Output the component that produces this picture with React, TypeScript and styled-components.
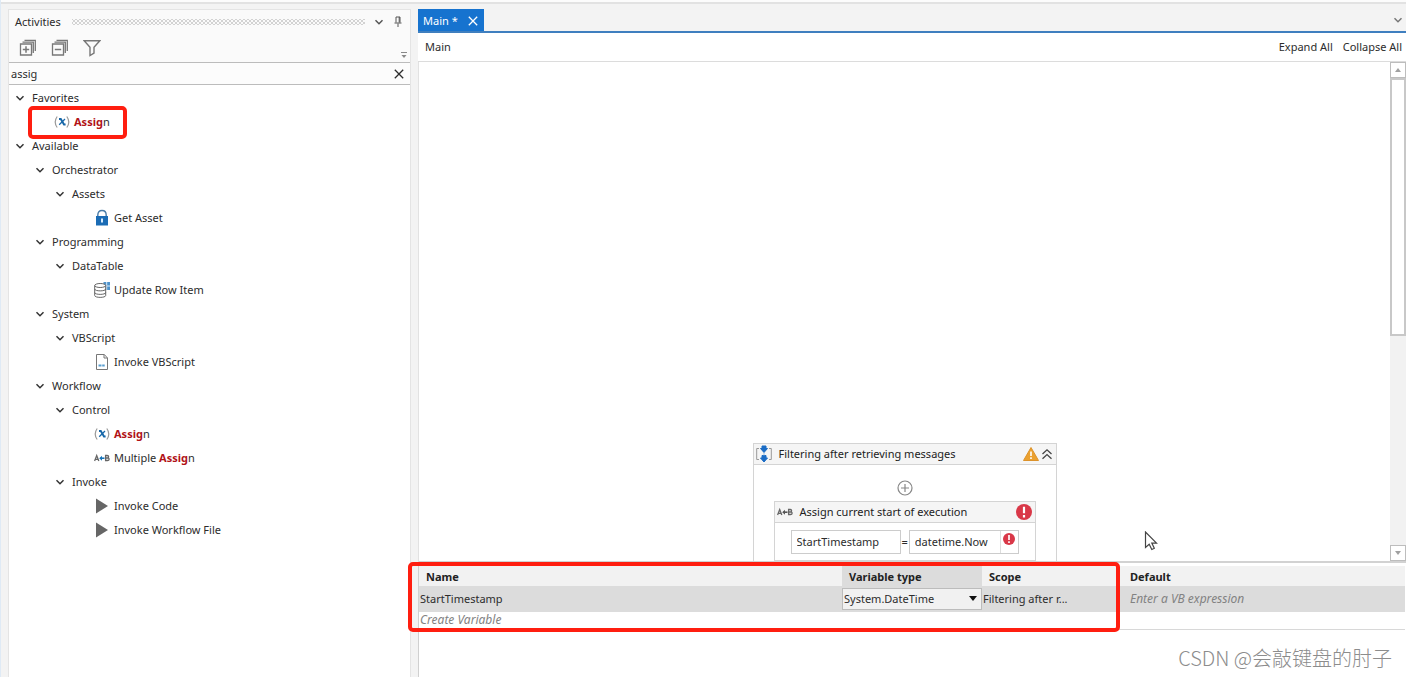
import React from "react";
import styled, { createGlobalStyle, css } from "styled-components";

const Global = createGlobalStyle`
  *, *::before, *::after { box-sizing: border-box; }
  body {
    margin: 0;
    background: #f2f2f2;
    color: #2c2c2c;
    font: 11px/16px "Noto Sans", "Open Sans", sans-serif;
  }
  button, input, select { font: inherit; color: inherit; margin: 0; }
`;

const Shell = styled.div`
  position: relative;
  min-height: 100vh;
  display: grid;
  grid-template-columns: 403px minmax(0, 1fr);
  column-gap: 7px;
  padding: 9px 0 0 7px;
  border-left: 1px solid #dfeaf5;
  overflow: hidden;
  background: linear-gradient(#fcfcfc 2px, #e2e2e2 2px, #e2e2e2 4px, #f3f3f3 4px);
`;

const PlainButton = styled.button`
  display: inline-flex;
  align-items: center;
  justify-content: center;
  padding: 0;
  border: 0;
  background: none;
  cursor: pointer;
`;

/* ---------- activities panel ---------- */

const Sidebar = styled.aside`
  display: flex;
  flex-direction: column;
  background: #fff;
  border: 1px solid #e4e4e4;
  border-bottom: 0;
`;

const SidebarHeader = styled.header`
  position: relative;
  height: 53px;
  background: #fafafa;
  border-bottom: 1px solid #bcbcbc;
`;

const TitleRow = styled.div`
  display: flex;
  align-items: center;
  height: 24px;
  padding: 0 7px 0 6px;
`;

const PanelTitle = styled.h2`
  margin: 0;
  font-size: 11px;
  font-weight: 400;
`;

const Grip = styled.span`
  flex: 1;
  height: 6px;
  margin: 0 8px 0 11px;
  background-image: radial-gradient(#d2d2d2 1px, transparent 1px), radial-gradient(#d2d2d2 1px, transparent 1px);
  background-size: 4px 4px;
  background-position: 0 0, 2px 2px;
`;

const TitleActions = styled.div`
  display: flex;
  gap: 8px;
`;

const ToolRow = styled.div`
  display: flex;
  gap: 14px;
  padding: 5px 0 0 10px;
`;

const Overflow = styled.span`
  position: absolute;
  right: 3px;
  bottom: 3px;
  display: flex;
`;

const SearchRow = styled.label`
  display: flex;
  align-items: center;
  height: 22px;
  padding: 0 6px 0 2px;
  background: #fcfcfc;
  border-bottom: 1px solid #bcbcbc;
`;

const SearchInput = styled.input`
  flex: 1;
  min-width: 0;
  padding: 0;
  border: 0;
  outline: 0;
  background: transparent;
`;

const Tree = styled.ul`
  margin: 0;
  padding: 1px 0 0;
  list-style: none;
`;

const TreeItem = styled.li`
  position: relative;
`;

const TreeRow = styled.button<{ $depth: number; $leaf?: boolean }>`
  display: flex;
  align-items: center;
  gap: ${(p) => (p.$leaf ? 4 : 6)}px;
  width: 100%;
  height: 24px;
  padding: 0 0 0 ${(p) => (p.$leaf ? 25 : 5) + p.$depth * 20}px;
  border: 0;
  background: none;
  text-align: left;
  white-space: pre;
  cursor: pointer;
`;

const Match = styled.b`
  color: #b11217;
  font-weight: 700;
`;

const Marker = styled.span`
  position: absolute;
  z-index: 2;
  border: 4px solid #ff1e10;
  border-radius: 5px;
  pointer-events: none;
`;

const RowMarker = styled(Marker)`
  top: -4px;
  left: 19px;
  width: 99px;
  height: 33px;
`;

/* ---------- designer ---------- */

const Workspace = styled.main`
  display: flex;
  flex-direction: column;
  min-width: 0;
`;

const TabBar = styled.div`
  display: flex;
  align-items: stretch;
  justify-content: space-between;
  height: 24px;
  padding-right: 2px;
  border-bottom: 2px solid #3f7fbf;
`;

const Tab = styled.div`
  display: flex;
  align-items: center;
  gap: 10px;
  padding: 2px 6px 0 5px;
  color: #fff;
  background: #1673cf;
`;

const TabLabel = styled(PlainButton)`
  white-space: pre;
`;

const Crumbs = styled.div`
  display: flex;
  align-items: center;
  gap: 10px;
  height: 29px;
  padding: 0 4px 0 7px;
  background: #fff;
  border-bottom: 1px solid #dcdcdc;
`;

const Crumb = styled(PlainButton)`
  margin-right: auto;
`;

const CanvasRow = styled.div`
  flex: 1;
  display: flex;
  min-height: 160px;
  background: #fff;
  border-left: 1px solid #e2e2e2;
  border-bottom: 2px solid #d2d2d2;
`;

const Canvas = styled.div`
  position: relative;
  flex: 1;
  display: flex;
  flex-direction: column;
  justify-content: flex-end;
  align-items: center;
`;

const ScrollBar = styled.div`
  display: flex;
  flex-direction: column;
  justify-content: space-between;
  width: 16px;
  background: #f2f2f2;
`;

const ScrollHead = styled.div`
  flex: 0 0 274px;
  display: flex;
  flex-direction: column;
`;

const ScrollButton = styled(PlainButton)`
  flex: none;
  width: 16px;
  height: 16px;
  background: #fff;
  border: 1px solid #bdbdbd;
`;

const Thumb = styled.div`
  flex: 1;
  background: #fff;
  border: 2px solid #c8c8c8;
`;

const Sequence = styled.section`
  display: flex;
  flex-direction: column;
  align-items: center;
  width: 304px;
  border: 1px solid #d4d4d4;
  border-bottom: 0;
`;

const NodeHeader = styled.header`
  display: flex;
  align-items: center;
  gap: 7px;
  width: 100%;
  height: 21px;
  padding: 0 3px 0 2px;
  background: #f5f5f5;
  border-bottom: 1px solid #d4d4d4;
  color: #222;
`;

const NodeTitle = styled.h3`
  flex: 1;
  margin: 0;
  font-size: 11px;
  font-weight: 400;
`;

const Badges = styled.span`
  display: flex;
  align-items: center;
  gap: 2px;
`;

const AddButton = styled(PlainButton)`
  margin: 15px 0 5px;
`;

const AssignCard = styled.section`
  width: 262px;
  border: 1px solid #d4d4d4;
`;

const AssignBody = styled.div`
  display: flex;
  align-items: center;
  gap: 1px;
  padding: 7px 16px 6px;
  height: 37px;
`;

const Field = styled.label`
  display: flex;
  align-items: stretch;
  width: 110px;
  height: 24px;
  border: 1px solid #ccc;
  background: #fff;
`;

const FieldInput = styled.input`
  flex: 1;
  min-width: 0;
  padding: 0 5px;
  border: 0;
  outline: 0;
  background: transparent;
`;

const FieldBadge = styled.span`
  display: flex;
  padding: 2px 3px 0 2px;
  border-left: 1px solid #ddd;
`;

const Pointer = styled.svg`
  position: absolute;
  right: 232px;
  bottom: 10px;
`;

/* ---------- variables ---------- */

const Variables = styled.section`
  position: relative;
  height: 114px;
  padding: 3px 1px 0 0;
  background: #fff;
  border-left: 1px solid #d0d0d0;
`;

const VarTable = styled.table`
  width: 100%;
  table-layout: fixed;
  border-collapse: collapse;
  border-bottom: 1px solid #d8d8d8;
`;

const VarCol = styled.col<{ $width?: number }>`
  ${(p) => p.$width && css`width: ${p.$width}px;`}
`;

const Head = styled.th<{ $active?: boolean }>`
  height: 20px;
  padding: 1px 0 0 7px;
  background: ${(p) => (p.$active ? "#dcdcdc" : "#f2f2f2")};
  color: #222;
  font-weight: 700;
  text-align: left;
`;

const Cell = styled.td<{ $tall?: boolean }>`
  height: ${(p) => (p.$tall ? 26 : 17)}px;
  padding: 0;
  background: ${(p) => (p.$tall ? "#dcdcdc" : "#fff")};
`;

const CellInput = styled.input<{ $inset?: boolean }>`
  display: block;
  width: 100%;
  height: 16px;
  padding: 0 0 0 ${(p) => (p.$inset ? 7 : 1)}px;
  border: 0;
  outline: 0;
  background: transparent;
  &::placeholder {
    color: #828282;
    font-size: 12px;
    font-style: italic;
    opacity: 1;
  }
`;

const SelectWrap = styled.span<{ $boxed?: boolean }>`
  display: grid;
  grid-template-columns: 1fr 12px;
  align-items: center;
  height: 22px;
  ${(p) => p.$boxed && css`
    background: #f1f1f1;
    border: 1px solid #bcbcbc;
  `}
`;

const Select = styled.select`
  appearance: none;
  grid-column: 1 / 3;
  grid-row: 1;
  width: 100%;
  padding: 0 12px 0 1px;
  border: 0;
  outline: 0;
  background: transparent;
`;

const Arrow = styled.svg`
  grid-column: 2;
  grid-row: 1;
  pointer-events: none;
`;

const TableMarker = styled(Marker)`
  top: -1px;
  left: -11px;
  width: 712px;
  height: 70px;
`;

const Watermark = styled.p`
  position: absolute;
  right: 14px;
  bottom: 4px;
  margin: 0;
  color: #8c8c8c;
  font: 300 20px/30px "Noto Sans CJK SC", sans-serif;
`;

/* ---------- icons ---------- */

const Chevron = ({ color = "#333" }: { color?: string }) => (
  <svg width="12" height="12" viewBox="0 0 12 12" fill="none" stroke={color} strokeWidth="1.5">
    <path d="M2.5 4.2 6 7.7l3.5-3.5" />
  </svg>
);

const Cross = () => (
  <svg width="10" height="10" viewBox="0 0 10 10" fill="none" stroke="currentColor" strokeWidth="1.3">
    <path d="m.8.8 8.4 8.4M9.2.8.8 9.2" />
  </svg>
);

const Pin = () => (
  <svg width="10" height="12" viewBox="0 0 10 12" fill="none" stroke="#555">
    <path d="M3 6.500V1h4v5.500M1.500 7h7M5 7.500V11M6.200 1v5.500" />
  </svg>
);

const Boxes = ({ plus }: { plus?: boolean }) => (
  <svg width="18" height="18" viewBox="0 0 18 18" fill="none" stroke="#777" strokeWidth="1.300">
    <path d="M1.500 5h11v11h-11zM3.500 3.200H14.300V14M5.500 1.300H16.300V12" />
    <path d={plus ? "M3.800 10.500h6.400M7 7.300v6.400" : "M3.800 10.500h6.400"} strokeWidth="1.500" />
  </svg>
);

const Funnel = () => (
  <svg width="18" height="18" viewBox="0 0 18 18" fill="none" stroke="#777" strokeWidth="1.400">
    <path d="M1.200 1.700h15.600l-5.800 6.600v5.700l-4 2.500V8.300z" />
  </svg>
);

const Paren = () => (
  <svg width="16" height="16" viewBox="0 0 16 16" fill="none">
    <path d="M3.200 2.500Q-.8 8 3.200 13.500M12.800 2.500q4 5.500 0 11" stroke="#999" strokeWidth="1.200" />
    <path d="M5 5h1.800l3.200 5.500h1.600" stroke="#1767a8" strokeWidth="1.900" />
    <path d="M11 5 5.200 10.700" stroke="#1767a8" strokeWidth="1.300" />
  </svg>
);

const AtoB = ({ dark }: { dark?: boolean }) => (
  <svg width="16" height="16" viewBox="0 0 16 16" fill="none" strokeWidth="1.300">
    <path d="M.6 11 2.700 5.500 4.800 11M1.300 9.300h2.800M11.600 5.500v5h1.800q1.700 0 1.700-1.300T13.400 8h-1.800 1.500q1.500 0 1.500-1.200t-1.500-1.300z" stroke="#666" />
    <path d="M6.500 8.200h4" stroke={dark ? "#555" : "#1673b8"} strokeWidth="1.600" />
    <path d="M5.200 8.200 8 5.700v5z" fill={dark ? "#555" : "#1673b8"} />
  </svg>
);

const Lock = () => (
  <svg width="16" height="18" viewBox="0 0 16 18">
    <path d="M3.800 8V6Q3.800 1.500 8 1.500T12.200 6v2" fill="none" stroke="#4a7ca8" strokeWidth="1.400" />
    <path d="M2 7h12v9.500H2z" fill="#1b6cb5" />
    <path d="M7 9.500h2v4H7z" fill="#d6ecff" />
  </svg>
);

const Database = () => (
  <svg width="16" height="16" viewBox="0 0 16 16" fill="none">
    <path d="M9.500 0H16v8H9.500z" fill="#4f93cb" />
    <path d="M9.500 4H16M12.700 0v8" stroke="#d8ebfa" />
    <path d="M.7 3.500v10c0 2.500 11 2.500 11 0v-10z" fill="#fff" />
    <ellipse cx="6.200" cy="3.500" rx="5.500" ry="2" stroke="#666" fill="#fff" />
    <path d="M.7 3.500v10c0 2.500 11 2.500 11 0v-10M.7 7c0 2.500 11 2.500 11 0M.7 10.500c0 2.500 11 2.500 11 0" stroke="#666" />
  </svg>
);

const Doc = () => (
  <svg width="16" height="16" viewBox="0 0 16 16" fill="none">
    <path d="M2.500.5h7.800L13.500 4v11.500h-11z" stroke="#777" fill="#fff" />
    <path d="M10 .5V4h3.500" stroke="#777" />
    <path d="M4.500 11.500h3M8.200 11.500h2.500" stroke="#5a9ecf" strokeWidth="2" />
  </svg>
);

const Play = () => (
  <svg width="16" height="16" viewBox="0 0 16 16">
    <path d="M2 .5 14 8 2 15.500z" fill="#666" />
  </svg>
);

const SequenceIcon = () => (
  <svg width="16" height="18" viewBox="0 0 16 18" fill="none">
    <path d="M3 3.500H.7v11H3M13 3.500h2.300v11H13" stroke="#999" />
    <path d="M6 1h4v2.500h1.500L8 7.500 4.500 3.500H6zM6 10.500h4V13h1.500L8 17l-3.500-4H6z" fill="#1b6cc5" stroke="#1b6cc5" strokeLinejoin="round" />
    <path d="M8 7.500v3" stroke="#8fb8e0" />
  </svg>
);

const Warning = () => (
  <svg width="16" height="14" viewBox="0 0 16 14">
    <path d="M8 .5 15.500 13.500H.5z" fill="#eba130" stroke="#dc922a" strokeLinejoin="round" />
    <path d="M8 4.500v4.500M8 10.300v1.700" stroke="#fff" strokeWidth="1.600" />
  </svg>
);

const ErrorDot = ({ size }: { size: number }) => (
  <svg width={size} height={size} viewBox="0 0 16 16">
    <circle cx="8" cy="8" r="8" fill="#d93848" />
    <path d="M8 2.800v6.400M8 11v2.400" stroke="#fff" strokeWidth="2.200" />
  </svg>
);

const Collapse = () => (
  <svg width="12" height="12" viewBox="0 0 12 12" fill="none" stroke="#444" strokeWidth="1.300">
    <path d="M1.500 6 6 1.800 10.500 6M1.500 10.800 6 6.600l4.500 4.200" />
  </svg>
);

const Plus = () => (
  <svg width="16" height="16" viewBox="0 0 16 16" fill="none" stroke="#888" strokeWidth="1.200">
    <circle cx="8" cy="8" r="7" />
    <path d="M4 8h8M8 4v8" />
  </svg>
);

const Triangle = ({ up }: { up?: boolean }) => (
  <svg width="8" height="6" viewBox="0 0 8 6">
    <path d={up ? "M1 5h6L4 1z" : "M1 1h6L4 5z"} fill="#a0a0a0" />
  </svg>
);

/* ---------- data ---------- */

type Item = {
  label: string;
  depth: number;
  icon?: React.ReactNode;
  match?: boolean;
  marked?: boolean;
};

const items: Item[] = [
  { label: "Favorites", depth: 0 },
  { label: "", match: true, depth: 1, icon: <Paren />, marked: true },
  { label: "Available", depth: 0 },
  { label: "Orchestrator", depth: 1 },
  { label: "Assets", depth: 2 },
  { label: "Get Asset", depth: 3, icon: <Lock /> },
  { label: "Programming", depth: 1 },
  { label: "DataTable", depth: 2 },
  { label: "Update Row Item", depth: 3, icon: <Database /> },
  { label: "System", depth: 1 },
  { label: "VBScript", depth: 2 },
  { label: "Invoke VBScript", depth: 3, icon: <Doc /> },
  { label: "Workflow", depth: 1 },
  { label: "Control", depth: 2 },
  { label: "", match: true, depth: 3, icon: <Paren /> },
  { label: "Multiple ", match: true, depth: 3, icon: <AtoB /> },
  { label: "Invoke", depth: 2 },
  { label: "Invoke Code", depth: 3, icon: <Play /> },
  { label: "Invoke Workflow File", depth: 3, icon: <Play /> },
];

export default function App() {
  return (
    <Shell>
      <Global />
      <Sidebar>
        <SidebarHeader>
          <TitleRow>
            <PanelTitle>Activities</PanelTitle>
            <Grip />
            <TitleActions>
              <PlainButton aria-label="Panel options"><Chevron color="#555" /></PlainButton>
              <PlainButton aria-label="Pin panel"><Pin /></PlainButton>
            </TitleActions>
          </TitleRow>
          <ToolRow>
            <PlainButton aria-label="Expand tree"><Boxes plus /></PlainButton>
            <PlainButton aria-label="Collapse tree"><Boxes /></PlainButton>
            <PlainButton aria-label="Filter"><Funnel /></PlainButton>
          </ToolRow>
          <Overflow>
            <svg width="6" height="7" viewBox="0 0 6 7">
              <path d="M0 .5h6" stroke="#888" />
              <path d="M.5 3h5L3 6z" fill="#888" />
            </svg>
          </Overflow>
        </SidebarHeader>
        <SearchRow>
          <SearchInput aria-label="Search activities" defaultValue="assig" />
          <PlainButton aria-label="Clear search"><Cross /></PlainButton>
        </SearchRow>
        <Tree>
          {items.map((item, i) => (
            <TreeItem key={i}>
              <TreeRow $depth={item.depth} $leaf={!!item.icon}>
                {item.icon ?? <Chevron />}
                <span>
                  {item.label}
                  {item.match && <><Match>Assig</Match>n</>}
                </span>
              </TreeRow>
              {item.marked && <RowMarker />}
            </TreeItem>
          ))}
        </Tree>
      </Sidebar>

      <Workspace>
        <TabBar>
          <Tab>
            <TabLabel>Main *</TabLabel>
            <PlainButton aria-label="Close tab"><Cross /></PlainButton>
          </Tab>
          <PlainButton aria-label="Open documents"><Chevron color="#777" /></PlainButton>
        </TabBar>
        <Crumbs>
          <Crumb>Main</Crumb>
          <PlainButton>Expand All</PlainButton>
          <PlainButton>Collapse All</PlainButton>
        </Crumbs>
        <CanvasRow>
          <Canvas>
            <Sequence>
              <NodeHeader>
                <SequenceIcon />
                <NodeTitle>Filtering after retrieving messages</NodeTitle>
                <Badges>
                  <Warning />
                  <PlainButton aria-label="Collapse sequence"><Collapse /></PlainButton>
                </Badges>
              </NodeHeader>
              <AddButton aria-label="Add activity"><Plus /></AddButton>
              <AssignCard>
                <NodeHeader>
                  <AtoB dark />
                  <NodeTitle>Assign current start of execution</NodeTitle>
                  <ErrorDot size={16} />
                </NodeHeader>
                <AssignBody>
                  <Field>
                    <FieldInput aria-label="To" defaultValue="StartTimestamp" />
                  </Field>
                  <span>=</span>
                  <Field>
                    <FieldInput aria-label="Value" defaultValue="datetime.Now" />
                    <FieldBadge><ErrorDot size={12} /></FieldBadge>
                  </Field>
                </AssignBody>
              </AssignCard>
            </Sequence>
            <Pointer width="14" height="20" viewBox="0 0 14 20">
              <path d="M1.500 1v15.500l3.700-3.300 2.600 5.300 2.500-1.200-2.500-5.200h4.700z" fill="#fff" stroke="#444" strokeWidth="1.200" />
            </Pointer>
          </Canvas>
          <ScrollBar>
            <ScrollHead>
              <ScrollButton aria-label="Scroll up"><Triangle up /></ScrollButton>
              <Thumb />
            </ScrollHead>
            <ScrollButton aria-label="Scroll down"><Triangle /></ScrollButton>
          </ScrollBar>
        </CanvasRow>

        <Variables>
          <VarTable>
            <colgroup>
              <VarCol $width={423} />
              <VarCol $width={140} />
              <VarCol $width={141} />
              <VarCol />
            </colgroup>
            <thead>
              <tr>
                <Head>Name</Head>
                <Head $active>Variable type</Head>
                <Head>Scope</Head>
                <Head>Default</Head>
              </tr>
            </thead>
            <tbody>
              <tr>
                <Cell $tall><CellInput aria-label="Name" defaultValue="StartTimestamp" /></Cell>
                <Cell $tall>
                  <SelectWrap $boxed>
                    <Select aria-label="Variable type"><option>System.DateTime</option></Select>
                    <Arrow width="8" height="6" viewBox="0 0 8 6"><path d="M0 0h8L4 5z" fill="#111" /></Arrow>
                  </SelectWrap>
                </Cell>
                <Cell $tall>
                  <SelectWrap>
                    <Select aria-label="Scope"><option>Filtering after r...</option></Select>
                  </SelectWrap>
                </Cell>
                <Cell $tall><CellInput $inset aria-label="Default" placeholder="Enter a VB expression" /></Cell>
              </tr>
              <tr>
                <Cell colSpan={4}><CellInput aria-label="New variable" placeholder="Create Variable" /></Cell>
              </tr>
            </tbody>
          </VarTable>
          <TableMarker />
        </Variables>
      </Workspace>
      <Watermark>CSDN @会敲键盘的肘子</Watermark>
    </Shell>
  );
}
